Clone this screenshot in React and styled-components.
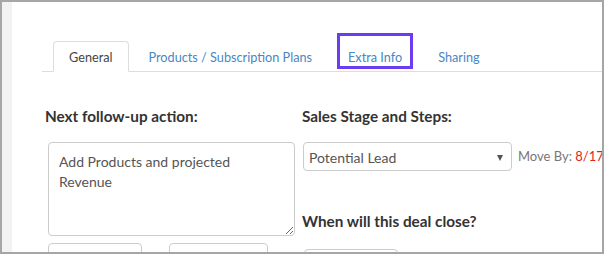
import styled, { createGlobalStyle } from "styled-components";

const GlobalStyle = createGlobalStyle`
  html, body {
    margin: 0;
    padding: 0;
    background: #ffffff;
  }
  body {
    font-family: Lato, "Liberation Sans", sans-serif;
  }
`;

const Frame = styled.div`
  width: 604px;
  height: 254px;
  box-sizing: border-box;
  border: 2px solid #a6a6a6;
  display: flex;
  overflow: hidden;
  background: #ffffff;
`;

const SideStrip = styled.div`
  width: 10px;
  flex-shrink: 0;
  background: #f2f2f2;
`;

const Main = styled.div`
  flex: 1;
  min-width: 0;
  display: flex;
  flex-direction: column;
`;

const TopClip = styled.div`
  height: 4px;
  overflow: hidden;
  padding-left: 359px;
`;

const TopText = styled.div`
  margin-top: -11px;
  font-size: 14px;
  line-height: 14px;
  color: #555;
  white-space: nowrap;
`;

const TabBar = styled.div`
  display: flex;
  margin: 39px 0 0 30px;
  padding-left: 11px;
  border-bottom: 1px solid #dddddd;
`;

const Tab = styled.div`
  position: relative;
  padding: 2px 15px 0;
  height: 27px;
  line-height: 27px;
  margin-right: 4px;
  margin-bottom: -1px;
  font-size: 12.7px;
  color: ${(p) => (p.active ? "#444" : "#4a86c5")};
  border: 1px solid ${(p) => (p.active ? "#dddddd" : "transparent")};
  border-bottom-color: ${(p) => (p.active ? "#ffffff" : "transparent")};
  border-radius: 4px 4px 0 0;
  background: ${(p) => (p.active ? "#ffffff" : "transparent")};
  white-space: nowrap;
`;

const Highlight = styled.span`
  position: absolute;
  left: 4px;
  top: -9px;
  width: 76px;
  height: 36px;
  box-sizing: border-box;
  border: 3px solid #6b3cf2;
  pointer-events: none;
`;

const Columns = styled.div`
  display: flex;
  gap: 7px;
  padding: 35px 0 0 33px;
`;

const LeftCol = styled.div`
  width: 250px;
  display: flex;
  flex-direction: column;
`;

const RightCol = styled.div`
  flex: 1;
  min-width: 0;
  display: flex;
  flex-direction: column;
`;

const Heading = styled.div`
  font-size: 15.3px;
  font-weight: 700;
  color: #333333;
  line-height: 18px;
  white-space: nowrap;
`;

const NoteArea = styled.textarea`
  margin: 17px 0 0 3px;
  width: 247px;
  height: 94px;
  box-sizing: border-box;
  border: 1px solid #cccccc;
  border-radius: 4px;
  padding: 9px 10px 7px;
  font-family: Lato, "Liberation Sans", sans-serif;
  font-size: 14px;
  line-height: 20px;
  color: #555555;
  resize: both;
  outline: none;
`;

const InputRow = styled.div`
  display: flex;
  gap: ${(p) => p.gap || 0}px;
  margin: ${(p) => p.top}px 0 0 ${(p) => p.left || 0}px;
`;

const Field = styled.div`
  width: ${(p) => p.w}px;
  height: 30px;
  box-sizing: border-box;
  border: 1px solid #cccccc;
  border-radius: 4px;
  flex-shrink: 0;
`;

const StageRow = styled.div`
  display: flex;
  align-items: center;
  margin: 17px 0 0 1px;
  white-space: nowrap;
`;

const SelectBox = styled.div`
  width: 209px;
  height: 29px;
  box-sizing: border-box;
  border: 1px solid #cccccc;
  border-radius: 4px;
  padding: 2px 8px 0 5px;
  display: flex;
  align-items: center;
  justify-content: space-between;
  font-size: 14px;
  color: #555555;
  flex-shrink: 0;
`;

const Caret = styled.span`
  width: 0;
  height: 0;
  border-left: 3px solid transparent;
  border-right: 3px solid transparent;
  border-top: 6px solid #555555;
`;

const MoveBy = styled.span`
  margin-left: 6px;
  font-size: 13px;
  color: #777777;
  margin-top: -2px;
`;

const Due = styled.span`
  color: #e0241b;
`;

const DealHeading = styled(Heading)`
  margin-top: 41px;
`;

export default function App() {
  return (
    <>
      <GlobalStyle />
      <Frame>
        <SideStrip />
        <Main>
          <TopClip>
            <TopText>(Jul 14, 2017)</TopText>
          </TopClip>
          <TabBar>
            <Tab active>General</Tab>
            <Tab>Products / Subscription Plans</Tab>
            <Tab>
              Extra Info
              <Highlight />
            </Tab>
            <Tab>Sharing</Tab>
          </TabBar>
          <Columns>
            <LeftCol>
              <Heading>Next follow-up action:</Heading>
              <NoteArea defaultValue="Add Products and projected Revenue" />
              <InputRow top={7} left={3} gap={27}>
                <Field w={94} />
                <Field w={99} />
              </InputRow>
            </LeftCol>
            <RightCol>
              <Heading>Sales Stage and Steps:</Heading>
              <StageRow>
                <SelectBox>
                  Potential Lead
                  <Caret />
                </SelectBox>
                <MoveBy>
                  Move By: <Due>8/17/2017</Due>
                </MoveBy>
              </StageRow>
              <DealHeading>When will this deal close?</DealHeading>
              <InputRow top={19} left={2}>
                <Field w={94} />
              </InputRow>
            </RightCol>
          </Columns>
        </Main>
      </Frame>
    </>
  );
}
